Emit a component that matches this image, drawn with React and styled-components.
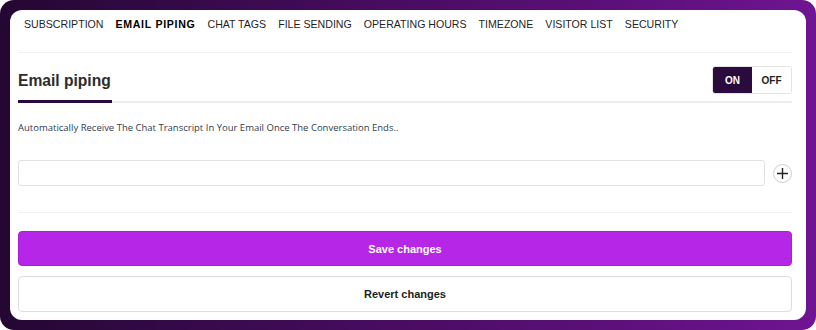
import React, { useState } from "react";
import styled, { createGlobalStyle } from "styled-components";

const GlobalStyle = createGlobalStyle`
    html, body {
        margin: 0;
        padding: 0;
        background: #ffffff;
    }
    * {
        box-sizing: border-box;
    }
`;

const tabs = [
    "SUBSCRIPTION",
    "EMAIL PIPING",
    "CHAT TAGS",
    "FILE SENDING",
    "OPERATING HOURS",
    "TIMEZONE",
    "VISITOR LIST",
    "SECURITY",
];

const App = () => {
    const [active, setActive] = useState("EMAIL PIPING");
    const [enabled, setEnabled] = useState(true);
    const [email, setEmail] = useState("");

    return (
        <>
            <GlobalStyle />
            <Frame>
                <Card>
                    <Nav>
                        {tabs.map((tab) => (
                            <NavItem
                                key={tab}
                                $active={tab === active}
                                onClick={() => setActive(tab)}
                            >
                                {tab}
                            </NavItem>
                        ))}
                    </Nav>

                    <Header>
                        <Title>Email piping</Title>
                        <Toggle>
                            <ToggleButton $on={enabled} onClick={() => setEnabled(true)}>
                                ON
                            </ToggleButton>
                            <ToggleButton $on={!enabled} onClick={() => setEnabled(false)}>
                                OFF
                            </ToggleButton>
                        </Toggle>
                    </Header>

                    <Description>
                        Automatically Receive The Chat Transcript In Your Email Once The Conversation Ends..
                    </Description>

                    <InputRow>
                        <EmailInput
                            type="email"
                            value={email}
                            onChange={(e) => setEmail(e.target.value)}
                        />
                        <AddButton aria-label="Add email">
                            <svg width="13" height="13" viewBox="0 0 13 13">
                                <path d="M6.5 1v11M1 6.5h11" stroke="#222" strokeWidth="1.4" />
                            </svg>
                        </AddButton>
                    </InputRow>

                    <Actions>
                        <ActionButton $primary>Save changes</ActionButton>
                        <ActionButton>Revert changes</ActionButton>
                    </Actions>
                </Card>
            </Frame>
        </>
    );
};

export default App;

const Frame = styled.div`
    width: 816px;
    height: 330px;
    padding: 10px;
    border-radius: 14px;
    background: linear-gradient(90deg, #240733 0%, #4a0c63 50%, #6f1492 100%);
`;

const Card = styled.div`
    height: 100%;
    background: #ffffff;
    border-radius: 12px;
    padding: 0 14px 0 8px;
    display: flex;
    flex-direction: column;
`;

const Nav = styled.nav`
    display: flex;
    gap: 12px;
    padding: 7px 6px 0;
    height: 43px;
    border-bottom: 1px solid #f0f0f0;
    font-family: "Liberation Sans", Arial, sans-serif;
`;

const NavItem = styled.span`
    font-size: 10.6px;
    line-height: 14px;
    color: ${(p) => (p.$active ? "#000000" : "#1f1f1f")};
    font-weight: ${(p) => (p.$active ? 700 : 400)};
    letter-spacing: ${(p) => (p.$active ? "0.7px" : "0")};
    cursor: pointer;
    white-space: nowrap;
`;

const Header = styled.div`
    display: flex;
    justify-content: space-between;
    align-items: center;
    margin-top: 14px;
    height: 36px;
    border-bottom: 2px solid #ececec;
`;

const Title = styled.h2`
    margin: 0 0 -2px;
    align-self: stretch;
    display: flex;
    align-items: center;
    padding: 0 1px 6px 0;
    white-space: nowrap;
    border-bottom: 3px solid #2a0a3a;
    font-family: "Liberation Sans", Arial, sans-serif;
    font-size: 15.6px;
    font-weight: 700;
    color: #2c2c2c;
`;

const Toggle = styled.div`
    display: flex;
    height: 28px;
    margin-bottom: 8px;
    border: 1px solid #e3e3e3;
    border-radius: 3px;
    overflow: hidden;
`;

const ToggleButton = styled.button`
    width: 39px;
    border: none;
    padding: 0;
    background: ${(p) => (p.$on ? "#2b0a3d" : "#ffffff")};
    color: ${(p) => (p.$on ? "#ffffff" : "#222222")};
    font-family: "Liberation Sans", Arial, sans-serif;
    font-size: 10px;
    font-weight: 700;
    cursor: pointer;
`;

const Description = styled.p`
    margin: 18px 0 0;
    font-family: "Open Sans", sans-serif;
    font-size: 9.5px;
    font-weight: 500;
    color: #2f3d52;
    line-height: 14px;
`;

const InputRow = styled.div`
    display: flex;
    align-items: center;
    gap: 8px;
    margin-top: 25px;
    padding-bottom: 26px;
    border-bottom: 1px solid #f0f0f0;
`;

const EmailInput = styled.input`
    flex: 1;
    height: 26px;
    border: 1px solid #e2e2e2;
    border-radius: 3px;
    outline: none;
    padding: 0 8px;
    font-family: "Open Sans", sans-serif;
    font-size: 11px;
`;

const AddButton = styled.button`
    width: 19px;
    height: 19px;
    padding: 0;
    border: 1px solid #cfcfcf;
    border-radius: 50%;
    background: #ffffff;
    display: flex;
    align-items: center;
    justify-content: center;
    cursor: pointer;
`;

const Actions = styled.div`
    display: flex;
    flex-direction: column;
    gap: 10px;
    margin-top: 18px;
`;

const ActionButton = styled.button`
    height: ${(p) => (p.$primary ? "35px" : "36px")};
    border-radius: 4px;
    border: 1px solid ${(p) => (p.$primary ? "#a81fd8" : "#dedede")};
    background: ${(p) => (p.$primary ? "#b526e6" : "#ffffff")};
    color: ${(p) => (p.$primary ? "#ffffff" : "#1e1e1e")};
    font-family: "Liberation Sans", Arial, sans-serif;
    font-size: 11px;
    font-weight: 700;
    cursor: pointer;
`;
